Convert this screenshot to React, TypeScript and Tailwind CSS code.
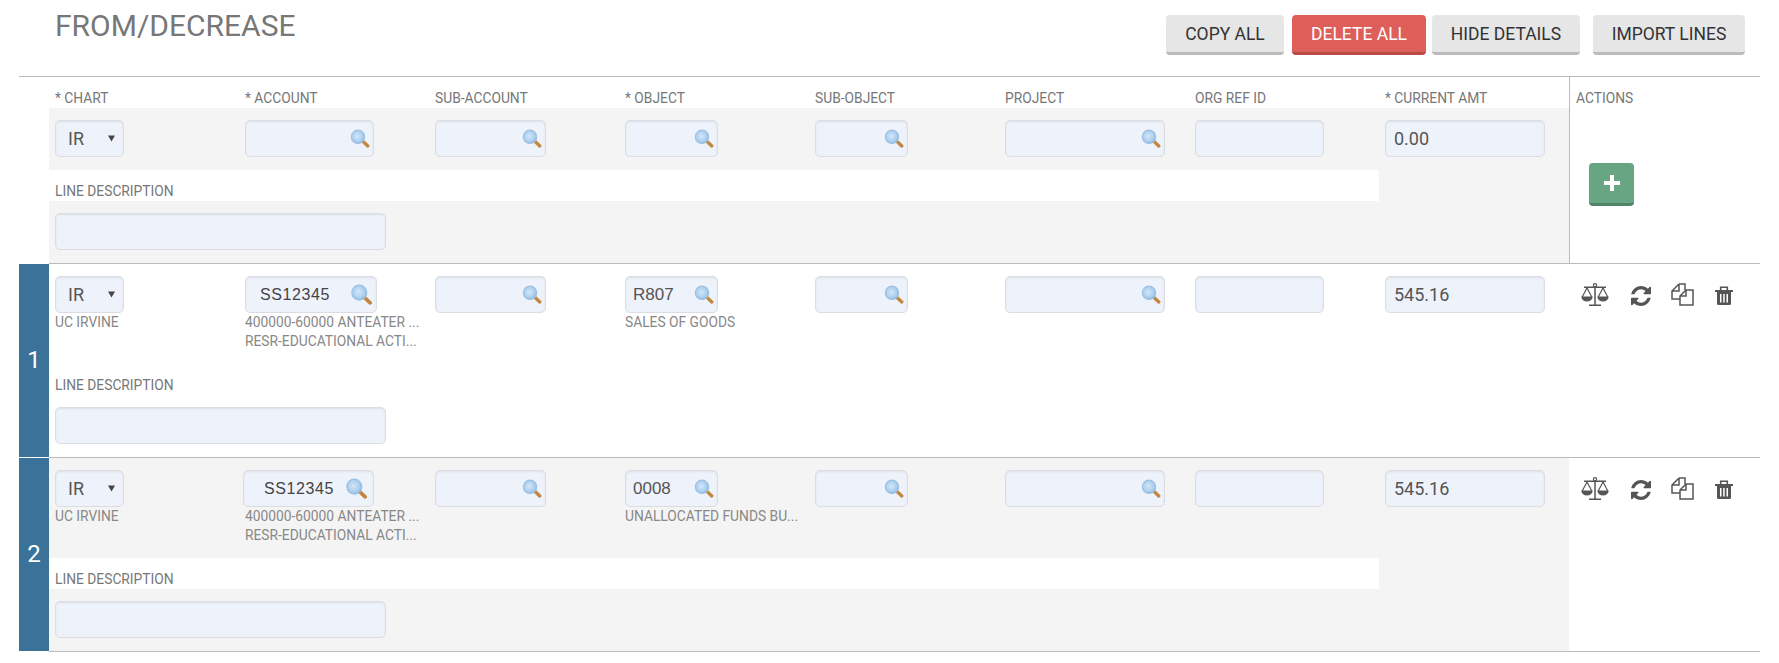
type Field = {
  value?: string
  lookup?: boolean
  arial?: boolean
  sub?: string[]
}

type LineProps = {
  number?: number
  shaded: boolean
  fields: Field[]
}

const labels = ["* CHART", "* ACCOUNT", "SUB-ACCOUNT", "* OBJECT", "SUB-OBJECT", "PROJECT", "ORG REF ID", "* CURRENT AMT"]
const widths = ["w-[69px]", "w-[129px]", "w-[111px]", "w-[93px]", "w-[93px]", "w-[160px]", "w-[129px]", "w-[160px]"]

const inputClass =
  "h-[37px] rounded-[5px] border border-[#dcdde2] bg-[#eef2fb] shadow-[inset_0_1px_2px_rgba(0,0,0,0.08)]"

function Lens({ big }: { big?: boolean }) {
  return (
    <svg viewBox="0 0 18 17" className={big ? "h-[21px] w-[23px]" : "h-[19px] w-[20px]"}>
      <defs>
        <radialGradient id="lens" cx="45%" cy="45%" r="60%">
          <stop offset="0%" stopColor="#d3e6f8" />
          <stop offset="70%" stopColor="#a9cdee" />
          <stop offset="100%" stopColor="#7fb0dc" />
        </radialGradient>
      </defs>
      <path d="M11.5 11 L16 15.2" stroke="#c4873f" strokeWidth="3" strokeLinecap="round" />
      <circle cx="7.2" cy="7" r="6" fill="url(#lens)" stroke="#9cc0e0" strokeWidth="1" />
    </svg>
  )
}

function ChartSelect() {
  return (
    <div className={`${inputClass} flex w-[69px] items-center justify-between pl-[12px] pr-[8px] text-[18px] text-[#555]`}>
      IR
      <svg viewBox="0 0 8 7" className="h-[7px] w-[7px]">
        <path d="M0 0h8L4 7z" fill="#444" />
      </svg>
    </div>
  )
}

function FieldBox({ field, index }: { field: Field; index: number }) {
  return (
    <div
      className={`${inputClass} relative ${widths[index]} leading-[35px] text-[#555] ${
        field.arial ? "pl-[7px] font-['Liberation_Sans',sans-serif] text-[17px]" : "pl-[8px] text-[18px]"
      }`}
    >
      {field.value}
      {field.lookup && (
        <span className="absolute right-[3px] top-[8px]">
          <Lens />
        </span>
      )}
    </div>
  )
}

function AccountBox({ offset }: { offset: "first" | "second" }) {
  const first = offset === "first"
  return (
    <div
      className={`${inputClass} relative flex items-center font-['Liberation_Sans',sans-serif] text-[16px] tracking-[0.6px] text-[#444] ${
        first ? "w-[132px] pl-[14px]" : "-ml-[2px] w-[131px] pl-[20px]"
      }`}
    >
      SS12345
      <span className={`absolute top-[7px] ${first ? "right-[3px]" : "right-[5px]"}`}>
        <Lens big />
      </span>
    </div>
  )
}

function DescriptionBlock({ shaded }: { shaded: boolean }) {
  return (
    <>
      <div className={shaded ? "bg-[#f4f4f4]" : ""}>
        <div className="h-[31px] w-[1330px] bg-white pl-[6px] pt-[13px] text-[13.8px] leading-[16px] text-[#777]">LINE DESCRIPTION</div>
      </div>
      <div className={`h-[62px] pl-[6px] pt-[12px] ${shaded ? "bg-[#f4f4f4]" : ""}`}>
        <div className={`${inputClass} w-[331px]`} />
      </div>
    </>
  )
}

function ScaleIcon() {
  return (
    <svg viewBox="0 0 28 23" className="h-[23px] w-[28px]" fill="none" stroke="#555" strokeWidth="1.2">
      <path d="M14 3v18.5M8 22.3h12M3 4.3h22" strokeWidth="1.5" />
      <circle cx="14" cy="2.2" r="1.6" fill="#fff" />
      <path d="M6 5L1.2 14M6 5l4.8 9M22 5l-4.8 9M22 5l4.8 9" />
      <path d="M1 14h10a5 4 0 0 1-10 0zM17 14h10a5 4 0 0 1-10 0z" fill="#555" />
    </svg>
  )
}

function RefreshIcon() {
  return (
    <svg viewBox="128 128 1536 1536" className="h-[20px] w-[20px]">
      <path
        fill="#555"
        d="M1639 1056q0 5-1 7-64 268-268 434.5t-478 166.5q-146 0-282.5-55t-243.5-157l-129 129q-19 19-45 19t-45-19-19-45v-448q0-26 19-45t45-19h448q26 0 45 19t19 45-19 45l-137 137q71 66 161 102t187 36q134 0 250-65t186-179q11-17 53-117 8-23 30-23h192q13 0 22.5 9.5t9.5 22.5zm25-800v448q0 26-19 45t-45 19h-448q-26 0-45-19t-19-45 19-45l138-138q-148-137-349-137-134 0-250 65t-186 179q-11 17-53 117-8 23-30 23h-199q-13 0-22.5-9.5t-9.5-22.5v-7q65-268 270-434.5t480-166.5q146 0 284 55.5t245 156.5l130-129q19-19 45-19t45 19 19 45z"
      />
    </svg>
  )
}

function CopyIcon() {
  return (
    <svg viewBox="0 0 23 23" className="h-[23px] w-[23px]" fill="none" stroke="#555" strokeWidth="1.5">
      <path d="M8 1h6v6M8 1L1 8v8h8M8 1v7H1" />
      <path d="M15 7h7v15H9V13zM15 7v6H9" fill="#fff" />
    </svg>
  )
}

function TrashIcon() {
  return (
    <svg viewBox="0 0 18 19" className="h-[19px] w-[18px]">
      <path d="M0 4h18v2H0z" fill="#555" />
      <path d="M5.7 4V1.2h6.6V4" fill="none" stroke="#555" strokeWidth="1.6" />
      <path d="M2 6h14v11.5a1.5 1.5 0 0 1-1.5 1.5h-11A1.5 1.5 0 0 1 2 17.5z" fill="#555" />
      <path d="M5 8h1.5v8.5H5zM8.2 8h1.5v8.5H8.2zM11.5 8H13v8.5h-1.5z" fill="#fff" />
    </svg>
  )
}

function Line({ number, shaded, fields }: LineProps) {
  return (
    <div className="flex h-[194px]">
      <div className="mb-px flex w-[30px] items-center justify-center bg-[#3a7299] pb-[2px] text-[24px] text-white">{number}</div>
      <div className="flex flex-1 border-b border-[#bbb]">
        <div className="w-[1520px]">
          <div className={`grid h-[100px] grid-cols-[repeat(8,190px)] pt-[12px] ${shaded ? "bg-[#f4f4f4]" : ""}`}>
            {fields.map((field, index) => (
              <div key={labels[index]} className="pl-[6px]">
                {index === 0 && <ChartSelect />}
                {index === 1 && <AccountBox offset={number === 1 ? "first" : "second"} />}
                {index > 1 && <FieldBox field={field} index={index} />}
                {field.sub?.map((text) => (
                  <div key={text} className="whitespace-nowrap text-[13.8px] leading-[19px] text-[#888]">
                    {text}
                  </div>
                ))}
              </div>
            ))}
          </div>
          <DescriptionBlock shaded={shaded} />
        </div>
        <div className="flex flex-1 items-start pl-[12px] pt-[19px]">
          <ScaleIcon />
          <span className="ml-[22px] mt-[3px]">
            <RefreshIcon />
          </span>
          <span className="ml-[20px]">
            <CopyIcon />
          </span>
          <span className="ml-[21px] mt-[3px]">
            <TrashIcon />
          </span>
        </div>
      </div>
    </div>
  )
}

const baseFields = (object: string, objectSub: string): Field[] => [
  { sub: ["UC IRVINE"] },
  { sub: ["400000-60000 ANTEATER ...", "RESR-EDUCATIONAL ACTI..."] },
  { lookup: true },
  { value: object, lookup: true, arial: true, sub: [objectSub] },
  { lookup: true },
  { lookup: true },
  {},
  { value: "545.16" },
]

export default function App() {
  return (
    <div className="w-[1779px] bg-white pb-[11px] font-['Roboto',sans-serif]">
      <div className="flex h-[76px] items-start pl-[55px]">
        <h2 className="mt-[8px] text-[30px] leading-[36px] text-[#777]">FROM/DECREASE</h2>
        <div className="ml-auto mr-[34px] mt-[15px] flex text-[17.5px] text-[#333]">
          <button className="h-[40px] w-[118px] rounded-[4px] border-b-[3px] border-[#bbb] bg-[#e6e6e6] pt-[1px]">COPY ALL</button>
          <button className="ml-[8px] h-[40px] w-[134px] rounded-[4px] border-b-[3px] border-[#b84b47] bg-[#de5e5a] pt-[1px] text-white">DELETE ALL</button>
          <button className="ml-[6px] h-[40px] w-[148px] rounded-[4px] border-b-[3px] border-[#bbb] bg-[#e6e6e6] pt-[1px]">HIDE DETAILS</button>
          <button className="ml-[13px] h-[40px] w-[152px] rounded-[4px] border-b-[3px] border-[#bbb] bg-[#e6e6e6] pt-[1px]">IMPORT LINES</button>
        </div>
      </div>

      <div className="ml-[19px] w-[1741px] border-t border-[#bbb]">
        <div className="flex h-[187px]">
          <div className="w-[30px]" />
          <div className="flex flex-1 border-b border-[#bbb]">
            <div className="w-[1520px]">
              <div className="grid h-[31px] grid-cols-[repeat(8,190px)]">
                {labels.map((label) => (
                  <div key={label} className="pl-[6px] pt-[13px] text-[13.8px] leading-[16px] text-[#777]">
                    {label}
                  </div>
                ))}
              </div>
              <div className="grid h-[62px] grid-cols-[repeat(8,190px)] bg-[#f4f4f4] pt-[12px]">
                <div className="pl-[6px]">
                  <ChartSelect />
                </div>
                {[1, 2, 3, 4, 5].map((index) => (
                  <div key={index} className="pl-[6px]">
                    <FieldBox field={{ lookup: true }} index={index} />
                  </div>
                ))}
                <div className="pl-[6px]">
                  <FieldBox field={{}} index={6} />
                </div>
                <div className="pl-[6px]">
                  <FieldBox field={{ value: "0.00" }} index={7} />
                </div>
              </div>
              <DescriptionBlock shaded />
            </div>
            <div className="flex-1 border-l border-[#bbb] pl-[6px] pt-[13px] text-[13.8px] leading-[16px] text-[#777]">
              ACTIONS
              <button className="ml-[13px] mt-[57px] flex h-[43px] w-[45px] items-center justify-center rounded-[4px] border-b-[3px] border-[#4f8567] bg-[#68a583]">
                <svg viewBox="0 0 16 16" className="h-[16px] w-[16px]">
                  <path d="M6 0h4v6h6v4h-6v6H6v-6H0V6h6z" fill="#fff" />
                </svg>
              </button>
            </div>
          </div>
        </div>
        <Line number={1} shaded={false} fields={baseFields("R807", "SALES OF GOODS")} />
        <Line number={2} shaded fields={baseFields("0008", "UNALLOCATED FUNDS BU...")} />
      </div>
    </div>
  )
}
